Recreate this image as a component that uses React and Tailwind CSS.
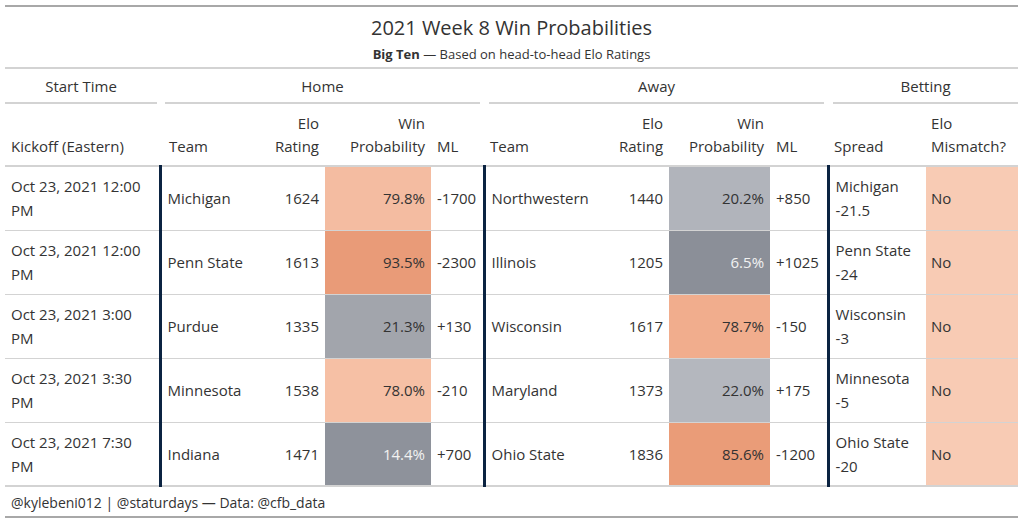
const ROWS = [
  {
    time: 'Oct 23, 2021 12:00',
    home: 'Michigan', helo: 1624, hp: '79.8%', hbg: 'bg-[#f4bca1]', hfg: 'text-[#333333]', hml: '-1700',
    away: 'Northwestern', aelo: 1440, ap: '20.2%', abg: 'bg-[#b1b4bb]', afg: 'text-[#333333]', aml: '+850',
    spread: ['Michigan', '-21.5'],
  },
  {
    time: 'Oct 23, 2021 12:00',
    home: 'Penn State', helo: 1613, hp: '93.5%', hbg: 'bg-[#e99b78]', hfg: 'text-[#333333]', hml: '-2300',
    away: 'Illinois', aelo: 1205, ap: '6.5%', abg: 'bg-[#8b8f98]', afg: 'text-[#f2f2f2]', aml: '+1025',
    spread: ['Penn State', '-24'],
  },
  {
    time: 'Oct 23, 2021 3:00',
    home: 'Purdue', helo: 1335, hp: '21.3%', hbg: 'bg-[#a2a5ac]', hfg: 'text-[#333333]', hml: '+130',
    away: 'Wisconsin', aelo: 1617, ap: '78.7%', abg: 'bg-[#f1ad8d]', afg: 'text-[#333333]', aml: '-150',
    spread: ['Wisconsin', '-3'],
  },
  {
    time: 'Oct 23, 2021 3:30',
    home: 'Minnesota', helo: 1538, hp: '78.0%', hbg: 'bg-[#f6c0a5]', hfg: 'text-[#333333]', hml: '-210',
    away: 'Maryland', aelo: 1373, ap: '22.0%', abg: 'bg-[#b4b7be]', afg: 'text-[#333333]', aml: '+175',
    spread: ['Minnesota', '-5'],
  },
  {
    time: 'Oct 23, 2021 7:30',
    home: 'Indiana', helo: 1471, hp: '14.4%', hbg: 'bg-[#8e929b]', hfg: 'text-[#f2f2f2]', hml: '+700',
    away: 'Ohio State', aelo: 1836, ap: '85.6%', abg: 'bg-[#ea9c78]', afg: 'text-[#333333]', aml: '-1200',
    spread: ['Ohio State', '-20'],
  },
]

// gt-style table; font sizes tuned to match Segoe-ish reference
export default function App() {
  return (
    <div className="min-h-[525px] bg-white pt-[5px] px-[5px] font-['Open_Sans',sans-serif] text-[#333333]">
      <div className="w-[1013px] border-t-2 border-b-2 border-[#a8a8a8]">
        <div className="border-b-2 border-[#d3d3d3] pt-[8px] pb-[3px] text-center">
          <div className="text-[20px] leading-[26px]">2021 Week 8 Win Probabilities</div>
          <div className="mt-[3px] text-[13px] leading-[20px]">
            <span className="font-bold">Big Ten</span> — Based on head-to-head Elo Ratings
          </div>
        </div>

        <table className="w-[1013px] table-fixed border-collapse text-[15px]">
          <colgroup>
            <col className="w-[155px]" />
            <col className="w-[102px]" />
            <col className="w-[63px]" />
            <col className="w-[106px]" />
            <col className="w-[53px]" />
            <col className="w-[126px]" />
            <col className="w-[59px]" />
            <col className="w-[101px]" />
            <col className="w-[58px]" />
            <col className="w-[98px]" />
            <col className="w-[92px]" />
          </colgroup>
          <thead>
            <tr>
              <th className="p-0 font-normal">
                <div className="mr-[3px] border-b-2 border-[#d3d3d3] h-[35px] leading-[35px]">Start Time</div>
              </th>
              <th colSpan={4} className="p-0 font-normal">
                <div className="ml-[5px] mr-[4px] border-b-2 border-[#d3d3d3] h-[35px] leading-[35px]">Home</div>
              </th>
              <th colSpan={4} className="p-0 font-normal">
                <div className="ml-[5px] mr-[4px] border-b-2 border-[#d3d3d3] h-[35px] leading-[35px]">Away</div>
              </th>
              <th colSpan={2} className="p-0 font-normal">
                <div className="ml-[5px] border-b-2 border-[#d3d3d3] h-[35px] leading-[35px]">Betting</div>
              </th>
            </tr>
            <tr className="border-b-2 border-[#d3d3d3] align-bottom leading-[23px]">
              <th className="h-[62px] pl-[6px] pb-[7px] text-left font-normal">Kickoff (Eastern)</th>
              <th className="pl-[9px] pb-[7px] text-left font-normal">Team</th>
              <th className="pr-[6px] pb-[7px] text-right font-normal">Elo<br />Rating</th>
              <th className="pr-[6px] pb-[7px] text-right font-normal">Win<br />Probability</th>
              <th className="pl-[6px] pb-[7px] text-left font-normal">ML</th>
              <th className="pl-[6px] pb-[7px] text-left font-normal">Team</th>
              <th className="pr-[6px] pb-[7px] text-right font-normal">Elo<br />Rating</th>
              <th className="pr-[6px] pb-[7px] text-right font-normal">Win<br />Probability</th>
              <th className="pl-[6px] pb-[7px] text-left font-normal">ML</th>
              <th className="pl-[6px] pb-[7px] text-left font-normal">Spread</th>
              <th className="pl-[5px] pb-[7px] text-left font-normal">Elo<br />Mismatch?</th>
            </tr>
          </thead>
          <tbody>
            {ROWS.map((r, i) => (
              <tr
                key={i}
                className={`leading-[24px] ${i === ROWS.length - 1 ? 'border-b-2' : 'border-b'} border-[#d3d3d3]`}
              >
                <td className="h-[64px] pl-[6px] align-middle whitespace-nowrap">
                  {r.time}
                  <br />
                  PM
                </td>
                <td className="border-l-[3px] border-l-[#0b2341] pl-[6px] whitespace-nowrap">{r.home}</td>
                <td className="pr-[6px] text-right">{r.helo}</td>
                <td className={`pr-[6px] text-right ${r.hbg} ${r.hfg}`}>{r.hp}</td>
                <td className="pl-[6px] whitespace-nowrap">{r.hml}</td>
                <td className="border-l-[3px] border-l-[#0b2341] pl-[6px] whitespace-nowrap">{r.away}</td>
                <td className="pr-[6px] text-right">{r.aelo}</td>
                <td className={`pr-[6px] text-right ${r.abg} ${r.afg}`}>{r.ap}</td>
                <td className="pl-[6px] whitespace-nowrap">{r.aml}</td>
                <td className="border-l-[3px] border-l-[#0b2341] pl-[6px] whitespace-nowrap">
                  {r.spread[0]}
                  <br />
                  {r.spread[1]}
                </td>
                <td className="bg-[#f8cbb4] pl-[5px]">No</td>
              </tr>
            ))}
          </tbody>
        </table>

        <div className="pl-[6px] pt-[2px] h-[29px] leading-[27px] text-[14px]">
          @kylebeni012 | @staturdays — Data: @cfb_data
        </div>
      </div>
    </div>
  )
}
